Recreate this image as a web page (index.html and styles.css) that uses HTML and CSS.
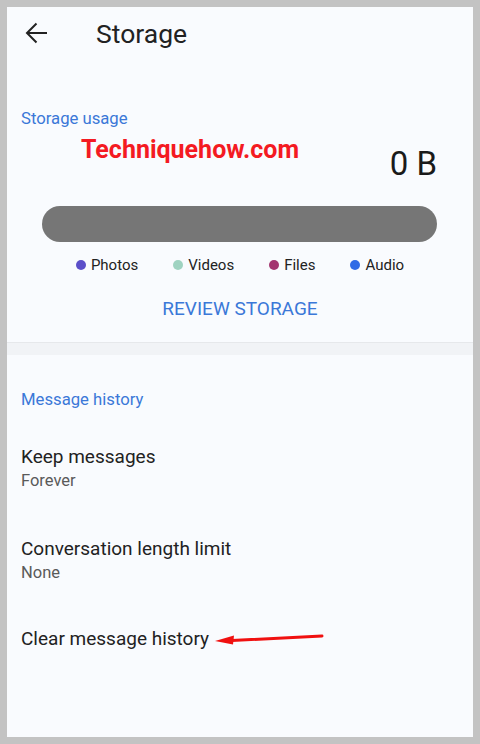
FILE: index.html
```html
<!DOCTYPE html>
<html lang="en">
<head>
    <meta charset="UTF-8">
    <meta name="viewport" content="width=device-width, initial-scale=1.0">
    <title>Storage</title>
    <link rel="stylesheet" href="styles.css">
</head>
<body>
    <div class="screen">
        <header class="top-bar">
            <svg class="back" width="24" height="24" viewBox="0 0 24 24">
                <path d="M22 12H2.5M11.5 2.5L2 12l9.5 9.5" fill="none" stroke="#222" stroke-width="2"/>
            </svg>
            <h1>Storage</h1>
        </header>

        <section class="usage">
            <div class="label">Storage usage</div>
            <div class="usage-row">
                <span class="watermark">Techniquehow.com</span>
                <span class="size">0 B</span>
            </div>
            <div class="bar"></div>
            <ul class="legend">
                <li><span class="dot photos"></span>Photos</li>
                <li><span class="dot videos"></span>Videos</li>
                <li><span class="dot files"></span>Files</li>
                <li><span class="dot audio"></span>Audio</li>
            </ul>
            <div class="review">REVIEW STORAGE</div>
        </section>

        <div class="divider"></div>

        <section class="history">
            <div class="label">Message history</div>
            <div class="item">
                <div class="item-title">Keep messages</div>
                <div class="item-sub">Forever</div>
            </div>
            <div class="item">
                <div class="item-title">Conversation length limit</div>
                <div class="item-sub">None</div>
            </div>
            <div class="item single">
                <div class="item-title">Clear message history</div>
                <!-- 红色箭头标注 -->
                <svg class="arrow" width="112" height="14" viewBox="0 0 112 14">
                    <path d="M18 8.5L108 4" stroke="#f01010" stroke-width="3" stroke-linecap="round"/>
                    <path d="M1 9L20 3.5L19 12.5Z" fill="#f01010"/>
                </svg>
            </div>
        </section>
    </div>
</body>
</html>
```

FILE: styles.css
```css
body {
    margin: 0;
    background: #c3c3c3;
    font-family: Roboto, 'Noto Sans', sans-serif;
    color: #202124;
}

.screen {
    margin: 7px;
    height: 730px;
    background: #f9fbfe;
    overflow: hidden;
}

.top-bar {
    height: 52px;
    display: flex;
    align-items: center;
    padding-left: 18px;
}

.back {
    display: block;
}

.top-bar h1 {
    margin: 0 0 0 47px;
    font-size: 26.5px;
    font-weight: 400;
    color: #222;
}

.label {
    font-size: 16.7px;
    line-height: 20px;
    color: #3b78d8;
    padding-left: 14px;
}

.usage {
    padding-top: 50px;
}

.usage-row {
    display: flex;
    justify-content: space-between;
    padding: 0 36px 0 74px;
    height: 68px;
}

.watermark {
    color: #f41a22;
    font-weight: 700;
    font-size: 25px;
    margin-top: 6px;
}

.size {
    font-size: 33px;
    margin-top: 15px;
    color: #1a1a1a;
}

.bar {
    margin: 9px 36px 0 35px;
    height: 36px;
    border-radius: 18px;
    background: #767676;
}

.legend {
    list-style: none;
    margin: 14px 0 0;
    padding: 0;
    display: flex;
    justify-content: center;
    gap: 35px;
    font-size: 15px;
    line-height: 18px;
    color: #222;
}

.legend li {
    display: flex;
    align-items: center;
}

.dot {
    width: 10px;
    height: 10px;
    border-radius: 50%;
    margin-right: 5px;
}

.photos { background: #5b4fc9; }
.videos { background: #9fd3c1; }
.files { background: #a33570; }
.audio { background: #2f6be6; }

.review {
    text-align: center;
    font-size: 19px;
    line-height: 21px;
    color: #3b78d8;
    margin-top: 24px;
    height: 44px;
}

.divider {
    border-top: 1px solid #e6e8eb;
    height: 12px;
    background: #f1f3f6;
}

.history {
    padding-top: 35px;
}

.history .label {
    margin-bottom: 10px;
}

.item {
    padding: 26px 14px 0;
    height: 66px;
}

.item-title {
    font-size: 19px;
    line-height: 22px;
    color: #222;
}

.item-sub {
    font-size: 16.5px;
    line-height: 20px;
    margin-top: 3px;
    color: #5a5a5a;
}

.item.single {
    display: flex;
    align-items: center;
    height: auto;
    padding-top: 24px;
}

.arrow {
    margin-left: 5px;
}
```
